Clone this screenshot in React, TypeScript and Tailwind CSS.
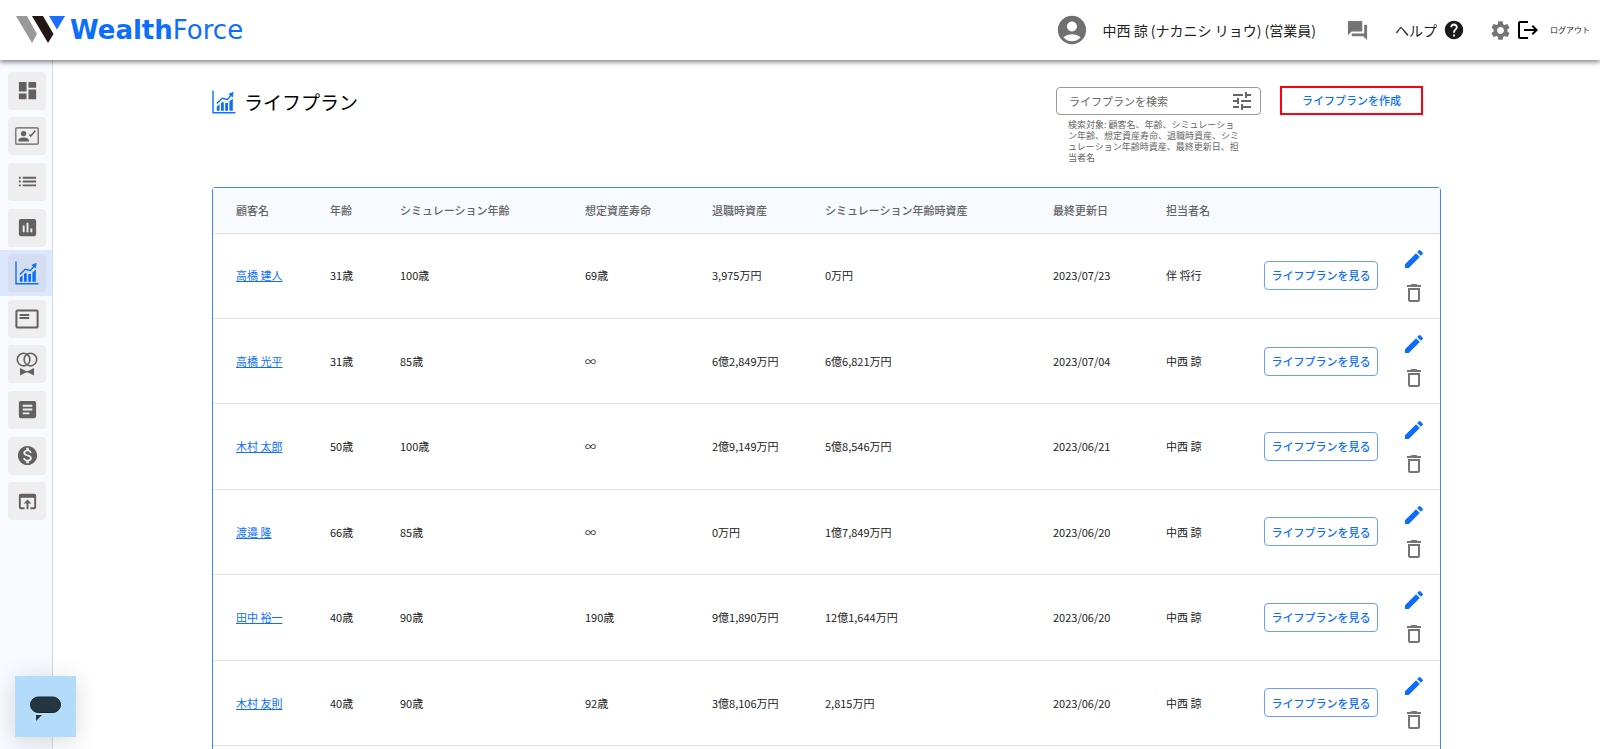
import React from 'react';
import {
  MdAccountCircle,
  MdArticle,
  MdDashboard,
  MdDeleteOutline,
  MdEdit,
  MdForum,
  MdHelp,
  MdInsertChart,
  MdList,
  MdLogout,
  MdMonetizationOn,
  MdOpenInBrowser,
  MdSettings,
  MdTune,
} from 'react-icons/md';

const ChartIcon: React.FC = () => (
  <svg width="24" height="24" viewBox="0 0 24 24" fill="none" aria-hidden="true">
    <path d="M1 0.5V22.7H23.5" stroke="currentColor" strokeWidth="1.4" />
    <path
      d="M4.800 16.500L7.600 14.200V20.800H4.800zM9 13L10.400 12L11.800 12.600V20.800H9zM13.200 13.200L16 12.800V20.800H13.200zM17.400 11.600L20.800 8.400V20.800H17.400z"
      fill="currentColor"
    />
    <path d="M4.800 13.400L10.200 8.200L15.400 9.400L19.600 4.600" stroke="currentColor" strokeWidth="1.4" />
    <path d="M16.400 4L21.600 1.800L20.800 7.600z" fill="currentColor" />
  </svg>
);

const ContactIcon: React.FC = () => (
  <svg width="24" height="18" viewBox="0 0 24 18" fill="none" aria-hidden="true">
    <rect x="0.8" y="0.8" width="22.4" height="16.4" rx="1" stroke="currentColor" strokeWidth="1.2" />
    <circle cx="8.6" cy="6.6" r="2.7" fill="currentColor" />
    <path d="M3.4 14.4V13C3.4 11.2 6.4 10.4 8.6 10.4S13.8 11.2 13.8 13V14.4z" fill="currentColor" />
    <path d="M14.4 7.4L15.8 9L20.4 3.8" stroke="currentColor" strokeWidth="1.5" />
  </svg>
);

const CardIcon: React.FC = () => (
  <svg width="24" height="20" viewBox="0 0 24 20" fill="none" aria-hidden="true">
    <rect x="1.4" y="1.4" width="21.2" height="17.2" rx="1.2" stroke="currentColor" strokeWidth="2" />
    <path d="M4.6 6H14.2M4.6 9H14.2" stroke="currentColor" strokeWidth="2" />
  </svg>
);

const RingsIcon: React.FC = () => (
  <svg width="22" height="24" viewBox="0 0 22 24" fill="none" aria-hidden="true">
    <circle cx="7.6" cy="7.6" r="6.3" stroke="currentColor" strokeWidth="1.6" />
    <circle cx="14.4" cy="7.6" r="6.3" stroke="currentColor" strokeWidth="1.6" />
    <path d="M4 16L10 19L11 19L12 19L18 16V23.4L12 20.6H10L4 23.4z" fill="currentColor" />
  </svg>
);

const menu = [
  { label: 'ダッシュボード', icon: <MdDashboard size={23} /> },
  { label: '顧客', icon: <ContactIcon /> },
  { label: 'リスト', icon: <MdList size={23} /> },
  { label: 'レポート', icon: <MdInsertChart size={23} /> },
  { label: 'ライフプラン', icon: <ChartIcon />, active: true },
  { label: 'カード', icon: <CardIcon /> },
  { label: 'マッチング', icon: <RingsIcon /> },
  { label: '記事', icon: <MdArticle size={23} /> },
  { label: '資産', icon: <MdMonetizationOn size={23} /> },
  { label: '外部リンク', icon: <MdOpenInBrowser size={23} /> },
];

const plans = [
  { name: '高橋 建人', age: '31歳', simAge: '100歳', life: '69歳', retire: '3,975万円', asset: '0万円', date: '2023/07/23', owner: '伴 将行' },
  { name: '高橋 光平', age: '31歳', simAge: '85歳', life: '∞', retire: '6億2,849万円', asset: '6億6,821万円', date: '2023/07/04', owner: '中西 諒' },
  { name: '木村 太郎', age: '50歳', simAge: '100歳', life: '∞', retire: '2億9,149万円', asset: '5億8,546万円', date: '2023/06/21', owner: '中西 諒' },
  { name: '渡邉 隆', age: '66歳', simAge: '85歳', life: '∞', retire: '0万円', asset: '1億7,849万円', date: '2023/06/20', owner: '中西 諒' },
  { name: '田中 裕一', age: '40歳', simAge: '90歳', life: '190歳', retire: '9億1,890万円', asset: '12億1,644万円', date: '2023/06/20', owner: '中西 諒' },
  { name: '木村 友則', age: '40歳', simAge: '90歳', life: '92歳', retire: '3億8,106万円', asset: '2,815万円', date: '2023/06/20', owner: '中西 諒' },
];

const Header: React.FC = () => (
  <header className="relative z-10 flex h-[60px] shrink-0 items-center justify-between bg-white pl-4 pr-2.5 shadow-[0_2px_5px_rgba(0,0,0,0.5)]">
    <a href="#" className="flex items-center gap-1 text-[#0d6efd]">
      <svg width="50" height="28" viewBox="0 0 50 28" aria-hidden="true">
        <path d="M0 0H11L21 18L16 27z" fill="#999999" />
        <path d="M16 0H27L37.500 18L32 27z" fill="#231815" />
        <path d="M33 0H49L41 13.500z" fill="#1a6dff" />
      </svg>
      <span className="font-['DejaVu_Sans'] text-[26px] leading-7">
        <b>Wealth</b>Force
      </span>
    </a>
    <div className="flex items-center text-sm text-[#222]">
      <MdAccountCircle size={34} className="mr-3.5 text-[#707070]" />
      <span className="mr-7.5">中西 諒 (ナカニシ リョウ) (営業員)</span>
      <button type="button" aria-label="メッセージ" className="mr-6.5 text-[#757575]">
        <MdForum size={23} />
      </button>
      <a href="#" className="mr-6 flex items-center gap-1.5">
        ヘルプ
        <MdHelp size={22} className="text-[#1a1a1a]" />
      </a>
      <button type="button" aria-label="設定" className="mr-1 text-[#757575]">
        <MdSettings size={23} />
      </button>
      <button type="button" className="flex items-center gap-2.5 text-[8px]">
        <MdLogout size={24} className="text-black" />
        ログアウト
      </button>
    </div>
  </header>
);

const Sidebar: React.FC = () => (
  <nav className="w-[53px] shrink-0 border-r border-[#d3dbe6] bg-[#f7faff] pt-2">
    <ul className="flex h-[456px] flex-col">
      {menu.map((item) => (
        <li key={item.label} className={`flex flex-1 items-center justify-end pr-1.5 ${item.active ? 'bg-[#dbe7ff]' : ''}`}>
          <a
            href="#"
            aria-label={item.label}
            className={`flex size-[38px] items-center justify-center rounded-sm ${
              item.active ? 'bg-[#d5def0] text-[#0d6efd]' : 'bg-[#eeeeee] text-[#616161]'
            }`}
          >
            {item.icon}
          </a>
        </li>
      ))}
    </ul>
  </nav>
);

const PlanTable: React.FC = () => (
  <div className="flex-1 rounded-t border border-b-0 border-[#4285f4]">
    <table className="h-[558px] w-full table-fixed text-left text-[11px] text-[#222]">
      <colgroup>
        <col className="w-[94px]" />
        <col className="w-[70px]" />
        <col className="w-[185px]" />
        <col className="w-[127px]" />
        <col className="w-[113px]" />
        <col />
        <col className="w-[113px]" />
        <col className="w-[98px]" />
        <col className="w-[161px]" />
        <col className="w-[38px]" />
      </colgroup>
      <thead>
        <tr className="h-[45px] border-b border-[#dee2e6] bg-[#f7faff] text-[#666]">
          {['顧客名', '年齢', 'シミュレーション年齢', '想定資産寿命', '退職時資産', 'シミュレーション年齢時資産', '最終更新日', '担当者名'].map((title) => (
            <th key={title} className="whitespace-nowrap pl-[23px] font-medium">
              {title}
            </th>
          ))}
          <td />
          <td />
        </tr>
      </thead>
      <tbody>
        {plans.map((plan) => (
          <tr key={plan.name} className="border-b border-[#dee2e6] whitespace-nowrap">
            <td className="pl-[23px]">
              <a href="#" className="text-[#0d6efd] underline">
                {plan.name}
              </a>
            </td>
            <td className="pl-[23px]">{plan.age}</td>
            <td className="pl-[23px]">{plan.simAge}</td>
            <td className="pl-[23px]">{plan.life}</td>
            <td className="pl-[23px]">{plan.retire}</td>
            <td className="pl-[23px]">{plan.asset}</td>
            <td className="pl-[23px]">{plan.date}</td>
            <td className="pl-[23px]">{plan.owner}</td>
            <td className="pl-[23px]">
              <button type="button" className="h-[29px] w-[114px] rounded border border-[#6c9cff] font-medium text-[#0d6efd]">
                ライフプランを見る
              </button>
            </td>
            <td>
              <div className="flex flex-col gap-2.5">
                <button type="button" aria-label="編集" className="w-6 text-[#0d6efd]">
                  <MdEdit size={24} />
                </button>
                <button type="button" aria-label="削除" className="w-6 text-[#757575]">
                  <MdDeleteOutline size={24} />
                </button>
              </div>
            </td>
          </tr>
        ))}
      </tbody>
    </table>
  </div>
);

const App: React.FC = () => {
  return (
    <div className="flex h-screen flex-col overflow-hidden bg-white font-['Noto_Sans_CJK_JP',sans-serif]">
      <Header />
      <div className="flex min-h-0 flex-1">
        <Sidebar />
        <main className="flex min-w-0 flex-1 flex-col px-[159px] pt-[26px]">
          <div className="mb-6 flex items-start justify-between pr-[18px]">
            <h1 className="flex items-center gap-2 text-[19px] leading-8 text-black">
              <span className="text-[#0d6efd]">
                <ChartIcon />
              </span>
              ライフプラン
            </h1>
            <div className="flex items-start gap-[19px]">
              <div className="w-[205px] text-[#666]">
                <div className="mt-px flex h-7 items-center rounded border border-[#999] pl-3 pr-1.5">
                  <input
                    type="text"
                    aria-label="ライフプランを検索"
                    placeholder="ライフプランを検索"
                    className="min-w-0 flex-1 text-[11px] outline-none placeholder:text-[#666]"
                  />
                  <button type="button" aria-label="絞り込み">
                    <MdTune size={24} />
                  </button>
                </div>
                <p className="ml-3 mt-1 w-[175px] text-[9px] leading-[11px]">
                  検索対象: 顧客名、年齢、シミュレーション年齢、想定資産寿命、退職時資産、シミュレーション年齢時資産、最終更新日、担当者名
                </p>
              </div>
              <button type="button" className="h-[29px] w-[143px] border-2 border-[#ff0012] text-[11px] font-medium text-[#0d6efd]">
                ライフプランを作成
              </button>
            </div>
          </div>
          <PlanTable />
        </main>
      </div>
      <button
        type="button"
        aria-label="チャット"
        className="fixed bottom-3 left-[15px] z-20 flex size-[61px] items-center justify-center bg-[#b3dcfa] shadow-[0_4px_24px_rgba(0,30,30,0.16)]"
      >
        <svg width="31" height="26" viewBox="0 0 31 26" fill="#263640" className="mt-1" aria-hidden="true">
          <rect x="0.5" y="1" width="30" height="15.500" rx="7.750" stroke="#17242b" />
          <path d="M6 19H12L6 25z" />
        </svg>
      </button>
    </div>
  );
};

export default App;
